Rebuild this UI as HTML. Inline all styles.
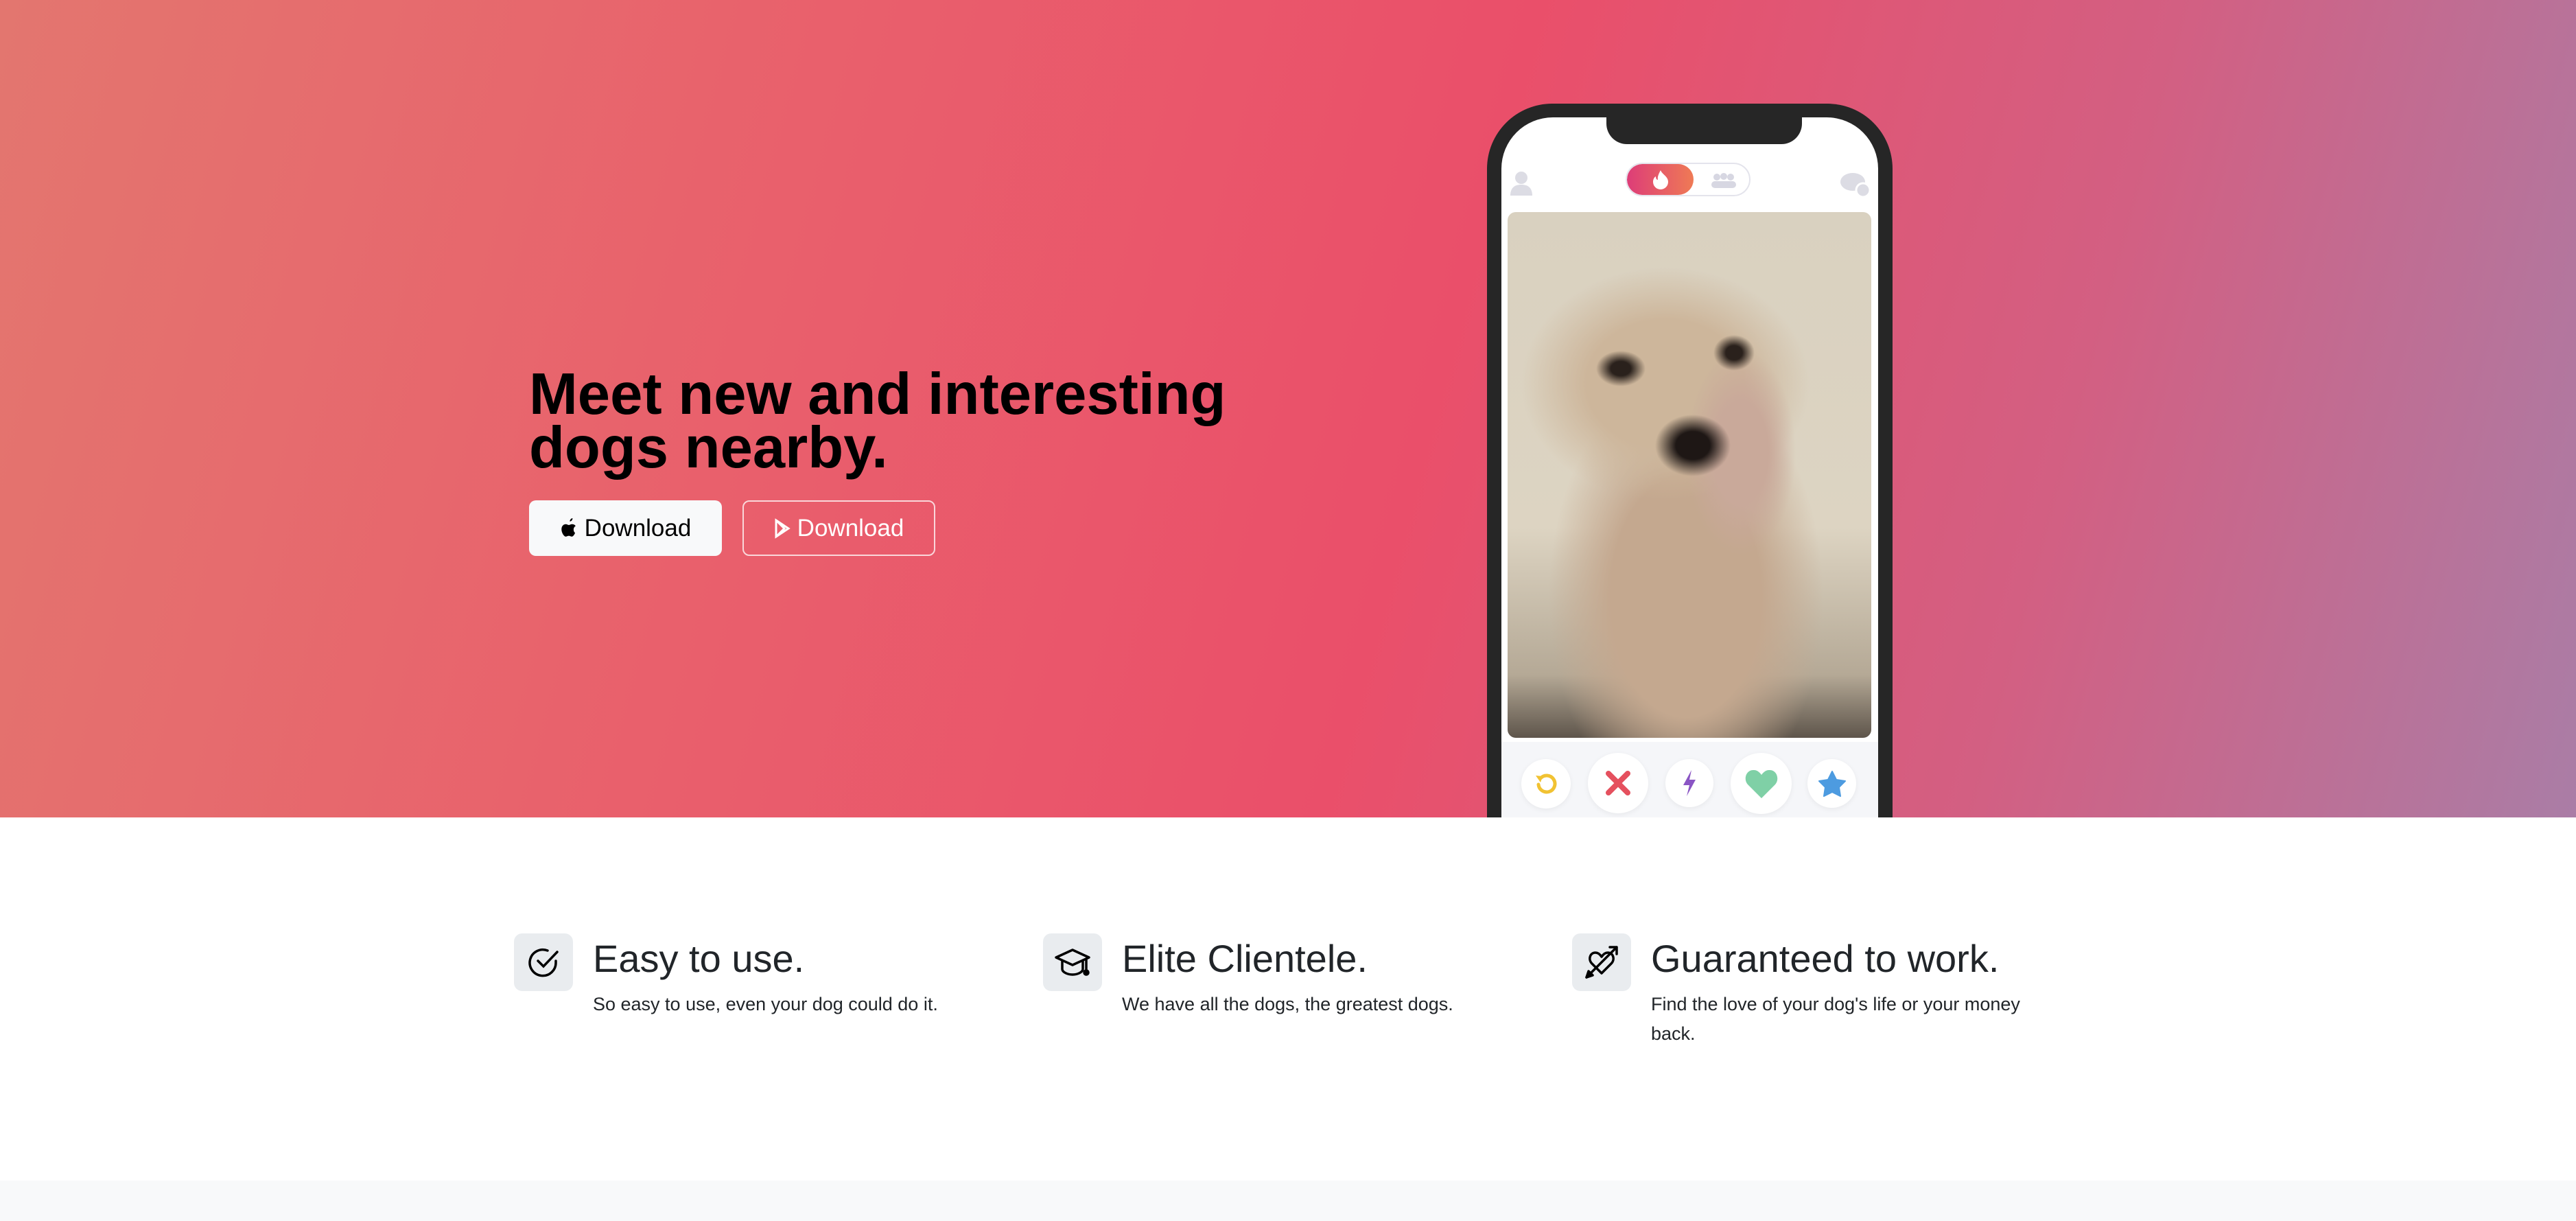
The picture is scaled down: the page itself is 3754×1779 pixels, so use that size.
<!DOCTYPE html>
<html><head><meta charset="utf-8"><style>
*{margin:0;padding:0;box-sizing:border-box}
body{width:3754px;height:1779px;overflow:hidden;font-family:"Liberation Sans",sans-serif;background:#fff;position:relative;color:#212529}
.hero{position:absolute;left:0;top:0;width:3754px;height:1191px;background:linear-gradient(105deg,#e3766f 0%,#e9606c 30%,#ea4f6a 55%,#d35f82 78%,#aa7da6 100%);overflow:hidden}
h1{position:absolute;left:771px;top:536px;font-size:85px;line-height:78px;font-weight:bold;color:#000;letter-spacing:0}
.btn{position:absolute;top:729px;height:81px;width:281px;border-radius:10px;font-size:35px;display:flex;align-items:center;justify-content:center;gap:10px}
.b1{left:771px;background:#f8f9fa;color:#000}
.b2{left:1082px;border:2px solid rgba(255,255,255,.75);color:#fff}
.phone{position:absolute;left:2167px;top:151px;width:591px;height:1200px;background:#262626;border-radius:95px}
.screen{position:absolute;left:21px;top:20px;right:21px;bottom:0;background:#fff;border-radius:75px;overflow:hidden}
.notch{position:absolute;left:153px;top:-2px;width:285px;height:41px;background:#262626;border-radius:0 0 30px 30px}
.photo{position:absolute;left:9px;top:138px;width:530px;height:766px;border-radius:12px;overflow:hidden;background:
radial-gradient(ellipse 36px 26px at 165px 228px,#2a211c 40%,transparent 100%),
radial-gradient(ellipse 30px 26px at 330px 205px,#2a211c 40%,transparent 100%),
radial-gradient(ellipse 55px 45px at 270px 340px,#1e1715 45%,transparent 100%),
radial-gradient(ellipse 80px 150px at 340px 350px,#c9a99a 50%,transparent 100%),
radial-gradient(ellipse 210px 170px at 230px 250px,#cdb69b 55%,transparent 100%),
radial-gradient(ellipse 200px 320px at 260px 560px,#c4a88f 55%,transparent 100%),
linear-gradient(180deg,#d9d1c0 0%,#ddd4c2 60%,#b5a996 88%,#5e554b 100%)}
.bar{position:absolute;left:0;right:0;top:910px;bottom:0;background:#f5f6f9}
.c{position:absolute;border-radius:50%;background:#fff;box-shadow:0 2px 8px rgba(0,0,0,.06);display:flex;align-items:center;justify-content:center}
.tog{position:absolute;left:181px;top:66px;width:182px;height:49px;border:2px solid #e4e4ec;border-radius:25px;overflow:hidden}
.tog .on{position:absolute;left:0;top:0;width:97px;height:100%;background:linear-gradient(90deg,#dd3d78,#ef7a55);border-radius:25px}
.feat{position:absolute;top:1360px}
.ic{position:absolute;left:0;top:0;width:86px;height:84px;background:#e9ecef;border-radius:12px;display:flex;align-items:center;justify-content:center}
.feat h3{position:absolute;left:115px;top:4px;font-size:56px;font-weight:normal;white-space:nowrap;color:#212529}
.feat p{position:absolute;left:115px;top:82px;width:565px;font-size:27px;line-height:43px;color:#212529}
.foot{position:absolute;left:0;top:1720px;width:3754px;height:59px;background:#f8f9fa}
</style></head><body>
<div class="hero">
<h1>Meet new and interesting<br>dogs nearby.</h1>
<div class="btn b1"><svg width="26" height="30" viewBox="0 0 24 28"><path fill="#000" d="M17 0c.2 2-1.4 4.3-3.6 4.4-.3-2 1.5-4.2 3.6-4.4zM20.5 20c-1 2.3-2.5 5-4.4 5-1.7 0-2.2-1-4.2-1s-2.6 1-4.2 1C5.600 25 2 20 2 15c0-4.500 3-6.800 5.700-6.800 1.800 0 3 1.100 4.300 1.100 1.200 0 2.600-1.200 4.600-1.100 1.200 0 3.300.5 4.600 2.400-3.900 2.200-3.200 7.900-.7 9.400z"/></svg>Download</div>
<div class="btn b2"><svg width="24" height="30" viewBox="0 0 24 30"><path fill="none" stroke="#fff" stroke-width="3" d="M3 3l18 12L3 27z M3 3l12 12L3 27"/></svg>Download</div>
<div class="phone"><div class="screen">
<div class="notch"></div>
<svg style="position:absolute;left:13px;top:78px" width="32" height="36" viewBox="0 0 32 36"><circle cx="16" cy="10" r="9" fill="#dcdce4"/><path d="M0 36c0-12 7-16 16-16s16 4 16 16z" fill="#dcdce4"/></svg>
<div class="tog"><div class="on"></div><svg style="position:absolute;left:38px;top:9px" width="22" height="28" viewBox="0 0 22 28"><path fill="#fff" d="M11 0c2 6 11 9 11 17a11 11 0 0 1-22 0c0-4 2-7 4-8 0 3 1 5 3 5-1-5 2-10 4-14z"/></svg><svg style="position:absolute;left:120px;top:13px" width="42" height="22" viewBox="0 0 42 22"><g fill="#d7d7e2"><circle cx="11" cy="6" r="5"/><circle cx="21" cy="5" r="5"/><circle cx="31" cy="6" r="5"/><rect x="3" y="12" width="36" height="10" rx="5"/></g></svg></div>
<svg style="position:absolute;left:494px;top:80px" width="44" height="36" viewBox="0 0 44 36"><ellipse cx="18" cy="14" rx="18" ry="13" fill="#dcdce4"/><circle cx="33" cy="26" r="10" fill="#dcdce4" stroke="#fff" stroke-width="3"/></svg>
<div class="photo"></div>
<div class="bar"></div>
<div class="c" style="left:29px;top:935px;width:72px;height:72px"><svg width="36" height="36" viewBox="0 0 36 36"><path d="M10 10a12 12 0 1 1-3 9" fill="none" stroke="#f1c232" stroke-width="5" stroke-linecap="round"/><path d="M3 6l10 1-3 9z" fill="#f1c232"/></svg></div>
<div class="c" style="left:126px;top:926px;width:88px;height:88px"><svg width="40" height="40" viewBox="0 0 40 40"><path d="M6 6l28 28M34 6L6 34" stroke="#e5505e" stroke-width="8" stroke-linecap="round"/></svg></div>
<div class="c" style="left:239px;top:935px;width:70px;height:70px"><svg width="22" height="38" viewBox="0 0 22 38"><path d="M14 0L2 22h9L7 38 20 14h-9z" fill="#8a55c4"/></svg></div>
<div class="c" style="left:334px;top:926px;width:89px;height:89px"><svg width="48" height="42" viewBox="0 0 48 42"><path d="M24 42L4 22C-3 14 2 0 13 1c5 0 9 4 11 7 2-3 6-7 11-7 11-1 16 13 9 21z" fill="#7fd0a6"/></svg></div>
<div class="c" style="left:446px;top:935px;width:71px;height:71px"><svg width="40" height="38" viewBox="0 0 40 38"><path d="M20 1l6 12 13 2-9 9 2 13-12-6-12 6 2-13-9-9 13-2z" fill="#4d9be0" stroke="#4d9be0" stroke-width="2" stroke-linejoin="round"/></svg></div>
</div></div>
</div>
<div class="feat" style="left:749px"><div class="ic"><svg width="48" height="48" viewBox="0 0 48 48" fill="none" stroke="#000" stroke-width="3.5" stroke-linecap="round"><path d="M42 22v2A19 19 0 1 1 30 7"/><path d="M16 22l8 8L44 9"/></svg></div><h3>Easy to use.</h3><p>So easy to use, even your dog could do it.</p></div>
<div class="feat" style="left:1520px"><div class="ic"><svg width="52" height="52" viewBox="0 0 52 52" fill="none" stroke="#000" stroke-width="3.5" stroke-linejoin="round"><path d="M26 8L2 19l24 11 24-11z"/><path d="M11 24v12c0 4 7 8 15 8s15-4 15-8V24"/><path d="M46 21v18"/><circle cx="46" cy="41" r="3" fill="#000"/></svg></div><h3>Elite Clientele.</h3><p>We have all the dogs, the greatest dogs.</p></div>
<div class="feat" style="left:2291px"><div class="ic"><svg width="52" height="52" viewBox="0 0 52 52" fill="none" stroke="#000" stroke-width="3.5" stroke-linecap="round" stroke-linejoin="round"><path d="M26 42L12 28c-6-6-3-16 5-16 4 0 7 3 9 6 2-3 5-6 9-6 8 0 11 10 5 16z"/><path d="M4 48l44-44M38 4h10v10"/><path d="M4 48l3-9 6 6z" fill="#000"/></svg></div><h3>Guaranteed to work.</h3><p>Find the love of your dog's life or your money back.</p></div>
<div class="foot"></div>
</body></html>
